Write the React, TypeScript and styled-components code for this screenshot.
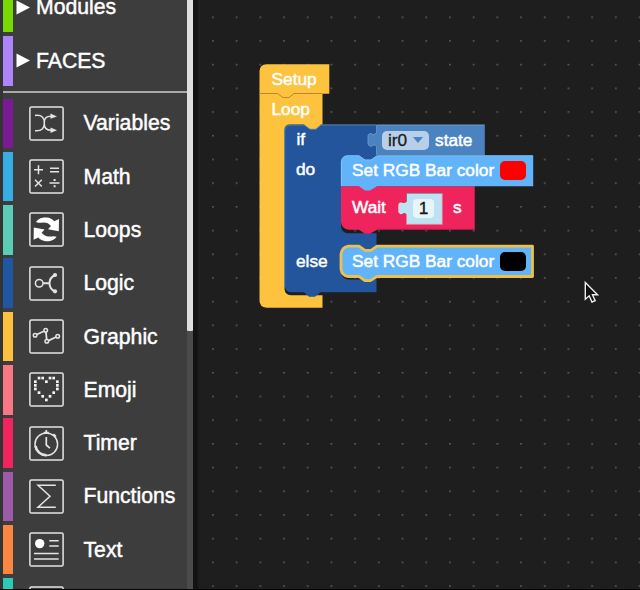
import React from "react";
import styled, { createGlobalStyle } from "styled-components";

const Global = createGlobalStyle`
  * { box-sizing: border-box; }
  body { margin: 0; overflow: hidden; background: #1e1e1e; }
`;

const Page = styled.div`
  display: flex;
  width: 640px;
  height: 590px;
  overflow: hidden;
  background: #1e1e1e;
  border-bottom: 1px solid #050505;
  color: #fff;
  font-family: "Liberation Sans", Arial, sans-serif;
`;

const Sidebar = styled.nav`
  width: 187px;
  flex: none;
  height: 100%;
  overflow: hidden;
  background: #3d3d3d;
  border-left: 3px solid #343434;
`;

const Groups = styled.div`
  display: flex;
  flex-direction: column;
  gap: 3.8px;
  margin-top: -17.3px;
`;

const Divider = styled.hr`
  height: 2px;
  margin: 5.4px 0 5.7px;
  border: 0;
  background: #a9a9a9;
`;

const Categories = styled.div`
  display: flex;
  flex-direction: column;
  gap: 3.8px;
`;

const Category = styled.div<{ $color: string }>`
  display: flex;
  flex: none;
  align-items: center;
  height: 49.5px;
  border-left: 10px solid ${(p) => p.$color};
  font-size: 21.2px;
  white-space: nowrap;
  -webkit-text-stroke: 0.45px #fff;
`;

const Arrow = styled.svg`
  width: 14px;
  height: 15px;
  margin: 0 6px 0 3px;
  fill: #fff;
`;

const IconBox = styled.svg`
  width: 35px;
  height: 35px;
  margin: 0 19.5px 0 16px;
  flex: none;
  fill: none;
  stroke: #e4e4e4;
  stroke-width: 1.5;
`;

const CategoryName = styled.span`
  line-height: 24px;
`;

const ScrollTrack = styled.div`
  width: 6px;
  flex: none;
  background: #4b4b4b;
`;

const ScrollThumb = styled.div`
  height: 331px;
  background: #dedede;
  border-radius: 0 0 1px 1px;
`;

const Gutter = styled.div`
  width: 6px;
  flex: none;
  background: linear-gradient(90deg, #121212 55%, #1a1a1a);
`;

const Workspace = styled.main`
  position: relative;
  flex: 1;
`;

const Canvas = styled.svg`
  position: absolute;
  inset: 0;
  width: 441px;
  height: 589px;
`;

const Fields = styled.div<{ $x: number; $y: number; $h?: number }>`
  position: absolute;
  left: ${(p) => p.$x - 199}px;
  top: ${(p) => p.$y}px;
  height: ${(p) => p.$h ?? 30}px;
  display: flex;
  align-items: center;
  font-size: 17.3px;
  white-space: nowrap;
  -webkit-text-stroke: 0.5px #fff;
`;

const Label = styled.span`
  font-size: 17.3px;
`;

const Dropdown = styled.span`
  display: flex;
  align-items: center;
  gap: 6px;
  width: 47px;
  height: 19px;
  margin-right: 6px;
  padding-left: 6px;
  border-radius: 5px;
  background: #b8cfe9;
  color: #1b1b1b;
  -webkit-text-stroke: 0.3px #1b1b1b;
`;

const Caret = styled.svg`
  width: 10px;
  height: 6px;
  fill: #4f84c1;
`;

const Swatch = styled.span<{ $color: string }>`
  width: 26px;
  height: 19.5px;
  margin-left: 6px;
  border-radius: 5px;
  background: ${(p) => p.$color};
`;

const NumberInput = styled.span`
  display: flex;
  align-items: center;
  justify-content: center;
  width: 21px;
  height: 19px;
  border-radius: 4px;
  background: #e6f4fb;
  color: #161616;
  -webkit-text-stroke: 0.3px #161616;
`;

const Pointer = styled.svg`
  position: absolute;
  left: 384px;
  top: 280px;
  width: 16px;
  height: 24px;
`;

const heart = [[1, 0], [2, 0], [4, 0], [5, 0], [0, 1], [3, 1], [6, 1], [0, 2], [6, 2], [0, 3], [6, 3], [1, 4], [5, 4], [2, 5], [4, 5], [3, 6]];
const refreshHalf = "M7 10 C10 5.8 14 5.4 17.5 5.6 C21 5.8 23.4 7.2 25.3 9.3 L30 7 L29.8 19.3 L19 17.3 L22 14 C20 11.4 17.5 10.3 14.5 10.4 C11.4 10.4 9 11.2 7 10 Z";

const icons: Record<string, React.ReactNode> = {
  Variables: (
    <>
      <path d="M6 9.5 C13 8.5 15.5 12 15.3 17 C15 22 17.5 24.6 23 24.3 M6 24.8 C13 25.3 15.5 22 15.3 17 C15 12 17.5 10 23 10.4" />
      <path d="M21.5 7.5 L28 10.4 L21.5 12.8Z M21.5 21.6 L28 24.3 L21.5 27Z" fill="#e4e4e4" stroke="none" />
    </>
  ),
  Math: (
    <>
      <path d="M5 10.7h9 M9.5 6.2v9 M21 9.2h9 M21 12.8h9 M6 20.7l6.8 6.8 M12.8 20.7l-6.8 6.8 M20.5 24.1h10" />
      <path d="M24.6 20h2v2h-2z M24.6 26.3h2v2h-2z" fill="#e4e4e4" stroke="none" />
    </>
  ),
  Loops: (
    <g fill="#fff" stroke="none">
      <path d={refreshHalf} />
      <path d={refreshHalf} transform="rotate(180 17.3 17.4)" />
    </g>
  ),
  Logic: (
    <>
      <circle cx="10.2" cy="17.2" r="3.8" />
      <path d="M14 17.2h6.5 M26 9 C22 11 20.5 14 20.5 17.2 C20.5 20.5 22 23.5 26 25.5" strokeWidth="2" />
      <circle cx="26" cy="9" r="2.1" fill="#e4e4e4" stroke="none" />
      <circle cx="26" cy="25.3" r="2.1" fill="#e4e4e4" stroke="none" />
    </>
  ),
  Graphic: (
    <>
      <path d="M7.8 15.5l7-3.3 M16.9 13l.8 7.3 M19.6 21.6l7.4-3.6" strokeWidth="1.8" />
      <circle cx="6.1" cy="16.3" r="1.8" />
      <circle cx="16.7" cy="11.2" r="1.8" />
      <circle cx="17.8" cy="22.2" r="1.8" />
      <circle cx="28.7" cy="17.3" r="1.8" />
    </>
  ),
  Emoji: (
    <g fill="#f4f4f4" stroke="none">
      {heart.map(([x, y]) => (
        <rect key={`${x}-${y}`} x={5 + x * 3.67} y={4.7 + y * 3.65} width="2.7" height="2.7" />
      ))}
    </g>
  ),
  Timer: (
    <>
      <circle cx="17.3" cy="18.3" r="11.3" />
      <path d="M6.5 20 C7.5 25.5 12 29 17.5 29.3" strokeWidth="2.6" />
      <path d="M17.3 4v4 M14.8 6.5h5 M24.5 8l2.5 2.6 M17.3 11v8l3.6 3.2" strokeWidth="1.7" />
    </>
  ),
  Functions: <path d="M26.8 6.2H9l12 11.1L9 28.2h17.8" />,
  Text: (
    <>
      <circle cx="10.7" cy="11.6" r="4.7" fill="#fff" stroke="none" />
      <path d="M20.3 8.8h9.4 M20.3 14h9.4 M5 21.4h24.7 M5 27h24.7" />
    </>
  ),
};

const categories: [string, string][] = [
  ["Variables", "#7b1a95"],
  ["Math", "#36ade4"],
  ["Loops", "#5bcdb6"],
  ["Logic", "#2056a2"],
  ["Graphic", "#fdc140"],
  ["Emoji", "#f87785"],
  ["Timer", "#f1245f"],
  ["Functions", "#9c5aa8"],
  ["Text", "#fb8641"],
  ["", "#2ccbb8"],
];

function Group({ name, color }: { name: string; color: string }) {
  return (
    <Category $color={color}>
      <Arrow viewBox="0 0 14 15"><path d="M0.5 .5L14 7.5L.5 14.5Z" /></Arrow>
      <CategoryName>{name}</CategoryName>
    </Category>
  );
}

function Blocks() {
  return (
    <Canvas viewBox="199 0 441 589">
      <defs>
        <pattern id="dots" x="212" y="16.4" width="23.7" height="23.7" patternUnits="userSpaceOnUse">
          <rect width="1.8" height="1.6" fill="#585858" />
        </pattern>
      </defs>
      <rect x="199" width="441" height="589" fill="url(#dots)" />

      {/* Loop body, its inner mouth ends just below the nested block */}
      <path
        fill="#fdc33e"
        d="M259.5 93.5H322.5V124.5H321L316 129.5H310L304 124.5H290Q284.5 124.5 284.5 130V289Q285 295 291 295.3H322.5V307.7H266.5Q259.5 307.2 259.5 300Z"
      />
      <path fill="#fdc33e" d="M259.5 94V71Q260 64.5 266.5 64.3H329.3V93.7H294L289 97.5H283L277.5 93.7Z" />
      <path d="M260 93.5H277.5L283 97.5H289L294 93.5H322" fill="none" stroke="#a98434" strokeWidth="0.9" />

      {/* if / else container, the mouths keep the notch tabs filled */}
      <path
        fill="#22559c"
        d="M284.5 131Q285 125 291 124.7H304L310 129H316L321 124.7H376.5V156L371 160.5H365L359 156H347Q341 156 341 162V226Q341.5 233 348 233.3H376.5V247L371 251H365L359 247H347Q341 247 341 252V272Q342 279 348 279.5H376.5V292.3H320.5L315 296.7H309L304 292.3H291Q285 292 284.5 285Z"
      />
      <path
        d="M284.7 287V131Q285 125 291 124.9H304L310 129.2H316L321 124.9H376"
        fill="none"
        stroke="#6c91bd"
        strokeWidth="0.8"
      />

      {/* sensor value */}
      <path fill="#4b83c1" d="M376.5 124.7H484.8V155.3H376.5V146.5C373 142 371 150 368 144V135.5C371 130 373 138 376.5 132.5Z" />
      <path d="M376.5 155V146.5C373 142 371 150 368 144V135.5C371 130 373 138 376.5 132.5V125H484.6" fill="none" stroke="#7ba5d3" strokeWidth="0.7" />

      {/* Wait statement */}
      <path fill="#f0245d" d="M341 186.3H475V229.7H377L370 233.8H365L359 229.7H349Q341.5 229 341 222Z" />
      <path d="M474.6 186.5V229.3H377" fill="none" stroke="#a51c45" strokeWidth="0.8" />
      <path fill="#bfe2f2" d="M406.5 193H442.3V224.4H406.5V214.5C403 210 402 218 398.3 212V205C400 199 403.5 206 406.5 201.5Z" />
      <path d="M406.5 224.4H442.3V193.5" fill="none" stroke="#f36f96" strokeWidth="0.9" />
      <path d="M406.5 202V193.3H442" fill="none" stroke="#7d6572" strokeWidth="0.8" />

      {/* first colour statement */}
      <path
        fill="#62b4fa"
        d="M341 162Q341.5 156 347.5 155.5H359L365 159.7H371L377 155.5H533.2V186.2H377L370 190.4H365L359 186.2H341Z"
      />
      <path d="M341.3 186V162Q341.5 156 347.5 155.7H359L365 159.9H371L377 155.7H533" fill="none" stroke="#91c9f7" strokeWidth="0.7" />

      {/* selected colour statement */}
      <path
        fill="#62b4fa"
        stroke="#ecc04c"
        strokeWidth="2.8"
        strokeLinejoin="round"
        d="M341 254Q342 247 348.5 246.2H359L365 250.4H371L377 246.2H532.5V276.5H377L370 280.7H365L359 276.5H348.5Q342 276 341 269Z"
      />
    </Canvas>
  );
}

export default function App() {
  return (
    <>
      <Global />
      <Page>
        <Sidebar>
          <Groups>
            <Group name="Modules" color="#78db00" />
            <Group name="FACES" color="#af83fa" />
          </Groups>
          <Divider />
          <Categories>
            {categories.map(([name, color]) => (
              <Category key={name} $color={color}>
                <IconBox viewBox="0 0 35 35">
                  <rect x="0.9" y="0.9" width="33.2" height="33.2" rx="1.6" />
                  {icons[name]}
                </IconBox>
                <CategoryName>{name}</CategoryName>
              </Category>
            ))}
          </Categories>
        </Sidebar>
        <ScrollTrack><ScrollThumb /></ScrollTrack>
        <Gutter />
        <Workspace>
          <Blocks />
          <Fields $x={271.5} $y={64}><Label>Setup</Label></Fields>
          <Fields $x={271.5} $y={94}><Label>Loop</Label></Fields>
          <Fields $x={296.5} $y={124}><Label>if</Label></Fields>
          <Fields $x={296} $y={154}><Label>do</Label></Fields>
          <Fields $x={296} $y={246}><Label>else</Label></Fields>
          <Fields $x={382} $y={125}>
            <Dropdown>
              ir0
              <Caret viewBox="0 0 10 6"><path d="M0 0H10L5 6Z" /></Caret>
            </Dropdown>
            <Label>state</Label>
          </Fields>
          <Fields $x={352} $y={155.5}>
            <Label>Set RGB Bar color</Label>
            <Swatch $color="#fe0000" />
          </Fields>
          <Fields $x={352} $y={192}><Label>Wait</Label></Fields>
          <Fields $x={413} $y={193}><NumberInput>1</NumberInput></Fields>
          <Fields $x={453} $y={192}><Label>s</Label></Fields>
          <Fields $x={352} $y={246.5}>
            <Label>Set RGB Bar color</Label>
            <Swatch $color="#000" />
          </Fields>
          <Pointer viewBox="583 280 16 24">
            <path d="M585.3 282.5V299.2L589.2 295.8L592 302L595.2 300.6L592.4 294.7H597.5Z" fill="#111" stroke="#ececec" strokeWidth="1.4" />
          </Pointer>
        </Workspace>
      </Page>
    </>
  );
}
